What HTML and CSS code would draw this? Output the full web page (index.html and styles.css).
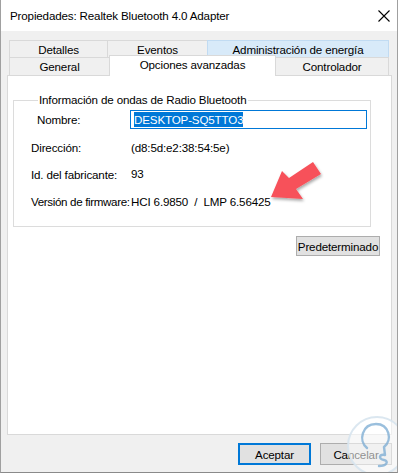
FILE: index.html
```html
<!DOCTYPE html>
<html lang="es">
<head>
<meta charset="utf-8">
<title>Propiedades</title>
<link rel="stylesheet" href="styles.css">
</head>
<body>
<div class="window">
  <div class="titlebar">
    <span class="title">Propiedades: Realtek Bluetooth 4.0 Adapter</span>
    <svg class="close" width="12" height="12" viewBox="0 0 12 12"><path d="M0.5 0.5 L11.5 11.5 M11.5 0.5 L0.5 11.5" stroke="#000" stroke-width="1.1" fill="none"/></svg>
  </div>
  <div class="tabs">
    <div class="tabrow row1">
      <div class="tab w-detalles">Detalles</div>
      <div class="tab w-eventos">Eventos</div>
      <div class="tab w-admin hover">Administración de energía</div>
    </div>
    <div class="tabrow row2">
      <div class="tab w-general">General</div>
      <div class="tab w-opciones selected">Opciones avanzadas</div>
      <div class="tab w-control">Controlador</div>
    </div>
  </div>
  <div class="panel">
    <fieldset class="group">
      <legend>Información de ondas de Radio Bluetooth</legend>
      <div class="grid">
        <div class="lbl indent">Nombre:</div>
        <div class="input"><span class="sel">DESKTOP-SQ5TTO3</span></div>
        <div class="lbl">Dirección:</div>
        <div class="val">(d8:5d:e2:38:54:5e)</div>
        <div class="lbl">Id. del fabricante:</div>
        <div class="val up">93</div>
        <div class="lbl tight">Versión de firmware:</div>
        <div class="val">HCI 6.9850&nbsp; / &nbsp;LMP 6.56425</div>
      </div>
    </fieldset>
    <button class="btn btn-default">Predeterminado</button>
    <svg class="arrow" width="70" height="56" viewBox="0 0 70 56">
      <defs>
        <filter id="sh" x="-30%" y="-30%" width="160%" height="160%">
          <feGaussianBlur in="SourceAlpha" stdDeviation="1.6"/>
          <feOffset dx="1" dy="2"/>
          <feComponentTransfer><feFuncA type="linear" slope="0.35"/></feComponentTransfer>
          <feMerge><feMergeNode/><feMergeNode in="SourceGraphic"/></feMerge>
        </filter>
      </defs>
      <polygon points="6,39 17,13 24,20 48,4 56,16 31,31 38,41" fill="#f7515a" filter="url(#sh)"/>
    </svg>
  </div>
  <div class="footer">
    <button class="btn btn-ok">Aceptar</button>
    <button class="btn btn-cancel">Cancelar</button>
  </div>
  <svg class="watermark" width="64" height="64" viewBox="0 0 64 64">
    <circle cx="34" cy="34" r="29" fill="rgba(255,255,255,0.55)" stroke="rgba(215,228,238,0.9)" stroke-width="2"/>
    <path d="M24 36 C15 29 19 12 33 12 C46 12 50 28 41 35 L42 43 C36 42 35 47 41 48 C46 49 44 54 36 54" fill="none" stroke="rgba(120,170,210,0.75)" stroke-width="2.4" stroke-linecap="round" stroke-linejoin="round"/>
  </svg>
</div>
</body>
</html>
```
FILE: styles.css
```css
* { box-sizing: border-box; }
html, body { margin: 0; padding: 0; background: #fff; }
body {
  font-family: "Liberation Sans", Arial, sans-serif;
  font-size: 11.6px;
  letter-spacing: -0.15px;
  color: #000;
}
.window {
  position: relative;
  width: 398px;
  height: 473px;
  background: #f0f0f0;
  border-left: 1px solid #a0a0a0;
  border-right: 1px solid #a0a0a0;
  border-bottom: 1px solid #8a8a8a;
  display: flex;
  flex-direction: column;
  overflow: hidden;
}
.titlebar {
  height: 31px;
  background: #fff;
  display: flex;
  align-items: center;
  justify-content: space-between;
  padding: 0 7px 0 9px;
  flex: none;
}
.title { line-height: 16px; }
.tabs {
  margin-top: 9px;
  padding-left: 8px;
  flex: none;
}
.tabrow { display: flex; height: 17px; }
.row2 { height: 18px; }
.tab {
  border: 1px solid #d9d9d9;
  border-bottom: none;
  background: #f0f0f0;
  text-align: center;
  line-height: 16px;
  padding-top: 1px;
  margin-left: -1px;
  white-space: nowrap;
}
.tab:first-child { margin-left: 0; }
.tab.hover {
  background: #d8eaf9;
  border-color: #c1dbf2;
}
.tab.selected {
  position: relative;
  z-index: 2;
  background: #fff;
  height: 21px;
  margin-top: -2px;
  line-height: 18px;
  padding-top: 0;
  border-color: #d9d9d9;
}
.w-detalles { width: 99px; }
.w-eventos { width: 101px; }
.w-admin { width: 182px; }
.w-general { width: 101px; }
.w-opciones { width: 167px; }
.w-control { width: 114px; }
.panel {
  position: relative;
  margin-left: 6px;
  width: 385px;
  height: 360px;
  background: #fff;
  border: 1px solid #d9d9d9;
  display: flex;
  flex-direction: column;
  flex: none;
}
.group {
  margin: 16px 0 0 5px;
  width: 358px;
  border: 1px solid #dcdcdc;
  padding: 2px 3px 16px 17px;
  min-width: 0;
}
.group legend {
  padding: 0 1px;
  margin-left: 7px;
  line-height: 16px;
}
.grid {
  display: grid;
  grid-template-columns: 99px 237px;
  grid-template-rows: 19px 16px 16px 16px;
  row-gap: 11px;
  align-items: center;
  line-height: 16px;
}
.lbl { white-space: nowrap; }
.lbl.tight { letter-spacing: -0.35px; }
.indent { padding-left: 6px; }
.val { padding-left: 1px; white-space: nowrap; }
.val.up { margin-top: -3px; }
.input {
  height: 19px;
  border: 1px solid #0078d7;
  padding: 1px 3px;
  line-height: 15px;
}
.sel {
  background: #0078d7;
  color: #fff;
  display: inline-block;
  line-height: 15px;
}
.btn {
  font-family: inherit;
  font-size: 11.6px;
  letter-spacing: -0.15px;
  color: #000;
  background: #e1e1e1;
  border: 1px solid #adadad;
  padding: 0;
  margin: 0;
}
.btn-default {
  align-self: flex-end;
  margin: 9px 11px 0 0;
  width: 84px;
  height: 20px;
}
.arrow {
  position: absolute;
  left: 257px;
  top: 82px;
}
.footer {
  display: flex;
  justify-content: flex-end;
  gap: 9px;
  padding: 8px 5px 0 0;
}
.btn-ok {
  width: 73px;
  height: 22px;
  border: 2px solid #0078d7;
}
.btn-cancel {
  width: 72px;
  height: 22px;
}
.watermark {
  position: absolute;
  left: 342px;
  top: 412px;
}
```
